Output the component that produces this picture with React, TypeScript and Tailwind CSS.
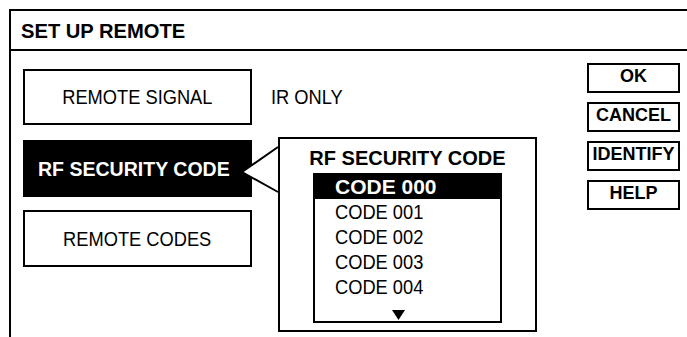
const sans = "font-['Liberation_Sans',Arial,sans-serif]";
const bold = `${sans} font-bold`;
// 参考图是窄体字，这里用横向压缩近似
const squeeze = "inline-block scale-x-[0.87]";

const codes = ["CODE 001", "CODE 002", "CODE 003", "CODE 004"];
const actions = ["OK", "CANCEL", "IDENTIFY", "HELP"];

export default function App() {
  return (
    <div className="w-[687px] h-[337px] overflow-hidden bg-white text-black">
      <div className="ml-[9px] mt-[9px] w-[678px] h-[328px] border-l-2 border-t-2 border-black flex flex-col">
        {/* 标题栏 */}
        <div className="h-[40px] border-b-2 border-black flex items-center pl-[10px]">
          <span className={`${bold} text-[21px] leading-none inline-block scale-x-[0.96] origin-left`}>SET UP REMOTE</span>
        </div>

        <div className="relative flex-1 flex">
          {/* 左侧菜单 */}
          <div className={`pl-[12px] pt-[18px] flex flex-col ${sans} text-[21px] leading-[24px]`}>
            <div className="flex items-center">
              <div className="w-[229px] h-[56px] border-2 border-black flex items-center justify-center">
                <span className={squeeze}>REMOTE SIGNAL</span>
              </div>
              <span className={`ml-[19px] origin-left ${squeeze}`}>IR ONLY</span>
            </div>
            <div className="mt-[15px] w-[229px] h-[57px] bg-black text-white flex items-center pl-[15px]">
              <span className={`${bold} inline-block scale-x-[0.93] origin-left`}>RF SECURITY CODE</span>
            </div>
            <div className="mt-[13px] w-[229px] h-[57px] border-2 border-black flex items-center justify-center">
              <span className={squeeze}>REMOTE CODES</span>
            </div>
          </div>

          {/* 右侧按钮 */}
          <div className="ml-auto pr-[7px] pt-[12px] flex flex-col gap-[9px]">
            {actions.map((a) => (
              <div
                key={a}
                className={`w-[93px] h-[30px] border-2 border-black text-center ${bold} text-[18px] leading-[23px]`}
              >
                {a}
              </div>
            ))}
          </div>

          {/* 弹出框指针 */}
          <svg className="absolute left-[229px] top-[94px]" width="52" height="52" viewBox="0 0 52 52">
            <polygon points="2,27 38,2 40,2 40,47 38,47" fill="white" />
            <polyline points="38,2 2,27 38,47" fill="none" stroke="black" strokeWidth="2" />
          </svg>

          {/* 弹出框 */}
          <div className="absolute left-[267px] top-[86px] w-[259px] h-[195px] border-2 border-black bg-white flex flex-col items-center">
            <div className={`mt-[8px] ${bold} text-[20px] leading-[22px]`}>RF SECURITY CODE</div>
            <div className={`relative mt-[4px] w-[189px] h-[150px] border-2 border-black ${sans} text-[21px]`}>
              <div className="h-[24px] bg-black text-white pl-[20px] font-bold leading-[24px]">CODE 000</div>
              {codes.map((c) => (
                <div key={c} className="h-[25px] pl-[20px] leading-[25px]">
                  <span className={`origin-left ${squeeze}`}>{c}</span>
                </div>
              ))}
              <svg className="absolute left-[77px] bottom-[1px]" width="13" height="10" viewBox="0 0 13 10">
                <polygon points="0,0 13,0 6.5,10" fill="black" />
              </svg>
            </div>
          </div>
        </div>
      </div>
    </div>
  );
}
